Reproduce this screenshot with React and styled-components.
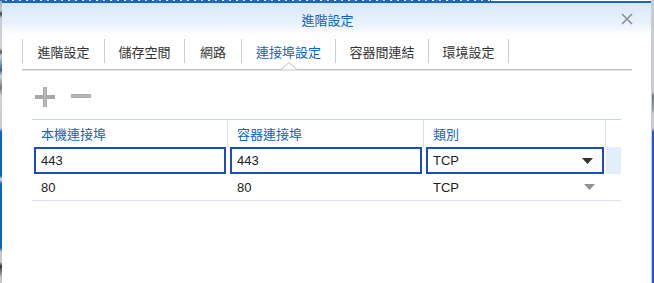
import React from "react";
import styled, { createGlobalStyle } from "styled-components";

const Global = createGlobalStyle`
  html, body { margin: 0; padding: 0; }
  body {
    width: 654px; height: 283px; overflow: hidden; background: #fff;
    font-family: "Liberation Sans", "Noto Sans CJK TC", sans-serif;
  }
`;

const Screen = styled.div`
  display: flex;
  width: 654px;
  height: 283px;
`;

const LeftStrip = styled.div`
  width: 2px;
  flex: none;
  background: linear-gradient(
    to bottom,
    #9aa3ad 0px, #c8ccd0 10px, #444 14px, #c8ccd0 18px, #cfd3d8 48px, #556 52px,
    #cfd3d8 56px, #3a5fa0 70px, #cfd3d8 76px, #777 88px, #cfd3d8 96px,
    #c9cdd2 128px, #1462c6 132px, #1462c6 176px, #e0e4ea 179px, #1462c6 184px,
    #1462c6 248px, #c5c9ce 252px, #c5c9ce 262px, #333 266px, #c5c9ce 278px
  );
`;

const RightStrip = styled.div`
  width: 2px;
  flex: none;
  background: linear-gradient(
    to bottom,
    #c9cdd2 0px, #c9cdd2 92px, #6e7378 96px, #9aa0a6 110px, #c9cdd2 114px,
    #c9cdd2 128px, #1462c6 132px, #1462c6 283px
  );
`;

const Dialog = styled.div`
  flex: 1;
  display: flex;
  flex-direction: column;
  background: #fff;
  border-right: 1px solid #c9ced4;
  position: relative;
`;

const TopText = styled.div`
  height: 1px;
  background: repeating-linear-gradient(
    to right, #2a6bd0 0px, #2a6bd0 5px, #cfe0f5 5px, #cfe0f5 7px, #1b5fc7 7px, #1b5fc7 12px, #e8f0fa 12px, #e8f0fa 14px
  );
  margin-left: -2px;
  margin-right: 160px;
`;

const Header = styled.div`
  height: 33px;
  border-top: 2px solid #1565cc;
  background: linear-gradient(to bottom, #d7e8f8 0%, #e9f2fb 60%, #ffffff 100%);
  display: flex;
  align-items: center;
  justify-content: center;
  position: relative;
`;

const Title = styled.div`
  font-size: 13px;
  color: #0b63cc;
  margin-left: 2px;
`;

const Close = styled.div`
  position: absolute;
  right: 18px;
  top: 10px;
  width: 12px;
  height: 12px;
  display: flex;
`;

const TabBar = styled.div`
  display: flex;
  margin: 3px 19px 0 20px;
  height: 30px;
  border-bottom: 1px solid #bfbfbf;
  box-shadow: 0 1px 0 #e6e6e6;
  position: relative;
`;

const Tab = styled.div`
  height: 24px;
  width: ${(p) => p.$w}px;
  box-sizing: border-box;
  display: flex;
  align-items: center;
  justify-content: center;
  border-left: 1px solid #c6d0d9;
  font-size: 13px;
  color: ${(p) => (p.$active ? "#0b63cc" : "#333")};
  font-family: "Noto Sans CJK TC", sans-serif;
  position: relative;
  &:last-child { border-right: 1px solid #c6d0d9; width: ${(p) => p.$w + 1}px; }
`;

const Notch = styled.svg`
  position: absolute;
  left: 50%;
  bottom: -7px;
  margin-left: -8px;
`;

const Toolbar = styled.div`
  display: flex;
  align-items: center;
  gap: 16px;
  height: 22px;
  margin: 16px 0 0 33px;
`;

const Table = styled.div`
  margin: 11px 0 0 30px;
  width: 589px;
  display: grid;
  grid-template-columns: 196px 196px 182px 15px;
  border-top: 1px solid #c9d6e3;
`;

const HeadCell = styled.div`
  height: 27px;
  display: flex;
  align-items: center;
  padding-left: 9px;
  font-size: 13px;
  color: #0b63cc;
  font-family: "Noto Sans CJK TC", sans-serif;
  border-right: ${(p) => (p.$last ? "none" : "1px solid #d8e2ec")};
  box-sizing: border-box;
`;

const Cell = styled.div`
  height: 27px;
  box-sizing: border-box;
  padding: ${(p) => (p.$edit ? "0 2px" : "0")};
  background: ${(p) => (p.$hl ? "#e2eefa" : "#fff")};
  border-bottom: ${(p) => (p.$bottom ? "1px solid #dbe3ec" : "none")};
  display: flex;
  align-items: stretch;
`;

const Field = styled.div`
  flex: 1;
  display: flex;
  align-items: center;
  justify-content: space-between;
  box-sizing: border-box;
  border: ${(p) => (p.$edit ? "2px solid #1b4cc0" : "2px solid transparent")};
  padding: 0 9px 0 ${(p) => (p.$edit ? "5px" : "7px")};
  font-size: 13px;
  color: #222;
`;

const Arrow = ({ color }) => (
  <svg width="11" height="6" viewBox="0 0 11 6">
    <path d="M0 0 H11 L5.5 6 Z" fill={color} />
  </svg>
);

const tabs = [
  { t: "進階設定", w: 82 },
  { t: "儲存空間", w: 80 },
  { t: "網路", w: 57 },
  { t: "連接埠設定", w: 94, active: true },
  { t: "容器間連結", w: 93 },
  { t: "環境設定", w: 80 },
];

const rows = [
  { a: "443", b: "443", c: "TCP", edit: true },
  { a: "80", b: "80", c: "TCP", edit: false },
];

export default function App() {
  return (
    <>
      <Global />
      <Screen>
        <LeftStrip />
        <Dialog>
          <TopText />
          <Header>
            <Title>進階設定</Title>
            <Close>
              <svg width="12" height="12" viewBox="0 0 12 12">
                <path d="M1 1 L11 11 M11 1 L1 11" stroke="#8a9096" strokeWidth="1.6" />
              </svg>
            </Close>
          </Header>
          <TabBar>
            {tabs.map((x) => (
              <Tab key={x.t} $active={x.active} $w={x.w}>
                {x.t}
                {x.active && (
                  <Notch width="16" height="8" viewBox="0 0 16 8">
                    <path d="M0 7.5 L8 0.5 L16 7.5" fill="#fff" stroke="#bfbfbf" strokeWidth="1" />
                  </Notch>
                )}
              </Tab>
            ))}
          </TabBar>
          <Toolbar>
            <svg width="20" height="20" viewBox="0 0 20 20">
              <rect x="8" y="0" width="4" height="20" fill="#a9a9a9" />
              <rect x="0" y="8" width="20" height="4" fill="#a9a9a9" />
              <rect x="9" y="0" width="2" height="20" fill="#b8b8b8" />
            </svg>
            <svg width="20" height="20" viewBox="0 0 20 20">
              <rect x="0" y="7" width="20" height="4" fill="#a9a9a9" />
              <rect x="0" y="8" width="20" height="2" fill="#b5b5b5" />
            </svg>
          </Toolbar>
          <Table>
            <HeadCell>本機連接埠</HeadCell>
            <HeadCell>容器連接埠</HeadCell>
            <HeadCell>類別</HeadCell>
            <HeadCell $last />
            {rows.map((r, i) => (
              <React.Fragment key={i}>
                <Cell $edit={r.edit} $bottom={!r.edit}>
                  <Field $edit={r.edit}>{r.a}</Field>
                </Cell>
                <Cell $edit={r.edit} $bottom={!r.edit}>
                  <Field $edit={r.edit}>{r.b}</Field>
                </Cell>
                <Cell $edit={r.edit} $bottom={!r.edit}>
                  <Field $edit={r.edit}>
                    {r.c}
                    <Arrow color={r.edit ? "#333" : "#8e9296"} />
                  </Field>
                </Cell>
                <Cell $hl={r.edit} $bottom={!r.edit} />
              </React.Fragment>
            ))}
          </Table>
        </Dialog>
        <RightStrip />
      </Screen>
    </>
  );
}
